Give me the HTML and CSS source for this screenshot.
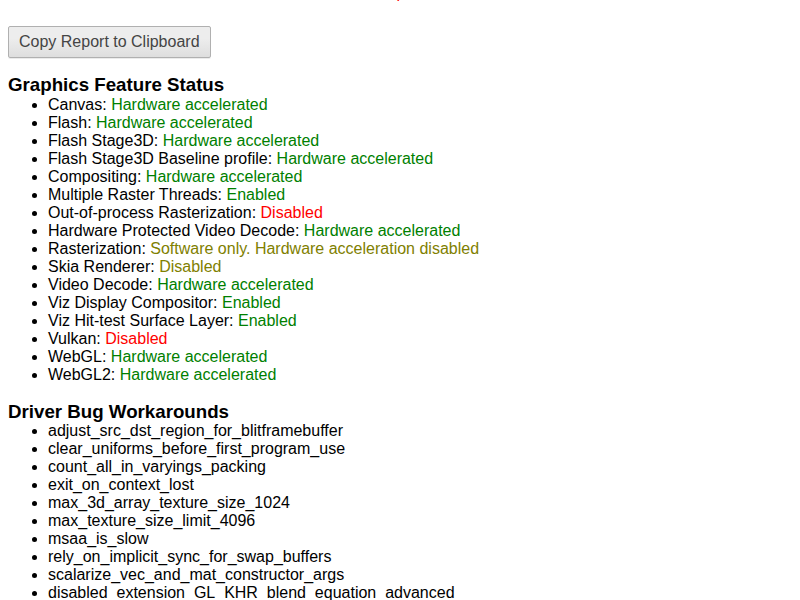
FILE: index.html
```html
<!DOCTYPE html>
<html>
<head>
<meta charset="utf-8">
<link rel="stylesheet" href="styles.css">
</head>
<body>
<div class="top-line"><span class="feature-red">p</span></div>
<div class="toolbar">
  <button class="copy-btn">Copy Report to Clipboard</button>
</div>
<h3>Graphics Feature Status</h3>
<ul>
  <li>Canvas: <span class="feature-green">Hardware accelerated</span></li>
  <li>Flash: <span class="feature-green">Hardware accelerated</span></li>
  <li>Flash Stage3D: <span class="feature-green">Hardware accelerated</span></li>
  <li>Flash Stage3D Baseline profile: <span class="feature-green">Hardware accelerated</span></li>
  <li>Compositing: <span class="feature-green">Hardware accelerated</span></li>
  <li>Multiple Raster Threads: <span class="feature-green">Enabled</span></li>
  <li>Out-of-process Rasterization: <span class="feature-red">Disabled</span></li>
  <li>Hardware Protected Video Decode: <span class="feature-green">Hardware accelerated</span></li>
  <li>Rasterization: <span class="feature-yellow">Software only. Hardware acceleration disabled</span></li>
  <li>Skia Renderer: <span class="feature-yellow">Disabled</span></li>
  <li>Video Decode: <span class="feature-green">Hardware accelerated</span></li>
  <li>Viz Display Compositor: <span class="feature-green">Enabled</span></li>
  <li>Viz Hit-test Surface Layer: <span class="feature-green">Enabled</span></li>
  <li>Vulkan: <span class="feature-red">Disabled</span></li>
  <li>WebGL: <span class="feature-green">Hardware accelerated</span></li>
  <li>WebGL2: <span class="feature-green">Hardware accelerated</span></li>
</ul>
<h3>Driver Bug Workarounds</h3>
<ul>
  <li>adjust_src_dst_region_for_blitframebuffer</li>
  <li>clear_uniforms_before_first_program_use</li>
  <li>count_all_in_varyings_packing</li>
  <li>exit_on_context_lost</li>
  <li>max_3d_array_texture_size_1024</li>
  <li>max_texture_size_limit_4096</li>
  <li>msaa_is_slow</li>
  <li>rely_on_implicit_sync_for_swap_buffers</li>
  <li>scalarize_vec_and_mat_constructor_args</li>
  <li>disabled_extension_GL_KHR_blend_equation_advanced</li>
  <li>disabled_extension_GL_KHR_blend_equation_advanced_coherent</li>
</ul>
</body>
</html>
```

FILE: styles.css
```css
html, body {
  overflow: hidden;
}
body {
  margin: 0 8px;
  font-family: "Liberation Sans", Arial, sans-serif;
  font-size: 16px;
  color: #000;
  background: #fff;
}
.top-line {
  height: 18px;
  line-height: 18px;
  margin-top: -16px;
  text-align: center;
  padding-left: 2px;
}
.toolbar {
  margin-top: 24px;
}
.copy-btn {
  font-family: "Liberation Sans", Arial, sans-serif;
  font-size: 16px;
  color: #444;
  height: 32px;
  padding: 0 10px;
  border: 1px solid #b0b0b0;
  border-radius: 2px;
  background: linear-gradient(#ededed, #ededed 38%, #dedede);
  box-shadow: 0 1px 0 rgba(0,0,0,0.08);
}
h3 {
  font-size: 18.72px;
  font-weight: bold;
  margin: 16px 0 0 0;
  line-height: 21.5px;
}
ul {
  margin: 0 0 17px 0;
  padding-left: 40px;
}
li {
  line-height: 18px;
}
.feature-green { color: rgb(0, 128, 0); }
.feature-red { color: rgb(255, 0, 0); }
.feature-yellow { color: rgb(128, 128, 0); }
```
